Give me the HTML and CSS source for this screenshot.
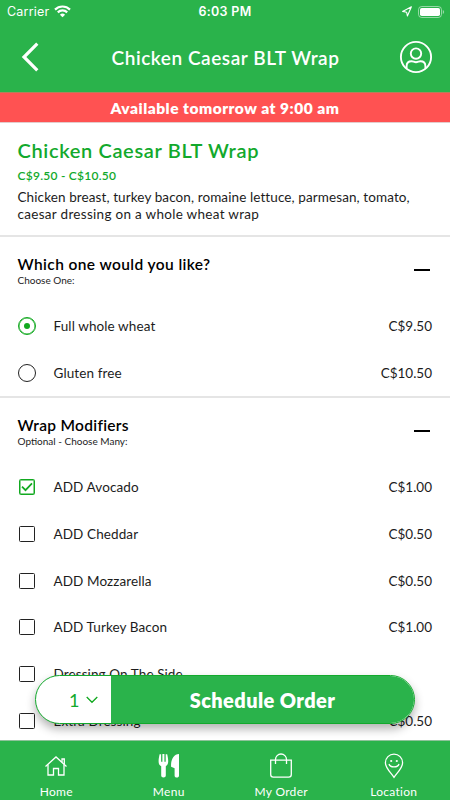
FILE: index.html
```
<!DOCTYPE html>
<html lang="en">
<head>
  <meta charset="UTF-8" />
  <meta name="viewport" content="width=device-width, initial-scale=1.0"/>
  <title>Chicken Caesar BLT Wrap</title>
  <link rel="stylesheet" href="styles.css">
</head>
<body>

  <header>
    <div class="status-bar">
      <div class="carrier">
        <span>Carrier</span>
        <svg width="17" height="13" viewBox="0 0 17 13" fill="none" stroke="#fff" stroke-width="2.2">
          <path d="M1 4.6a10.6 10.6 0 0 1 15 0"/>
          <path d="M3.8 7.4a6.7 6.7 0 0 1 9.4 0"/>
          <path d="M8.5 12.3L5.9 9.7a3.7 3.7 0 0 1 5.2 0z" fill="#fff" stroke="none"/>
        </svg>
      </div>
      <span class="time">6:03 PM</span>
      <div class="indicators">
        <svg width="10" height="11" viewBox="0 0 10 11" fill="none" stroke="#fff" stroke-width="1.1" stroke-linejoin="round">
          <path d="M9.4 .8L5.4 10 4.6 6.2 .6 5.4z"/>
        </svg>
        <svg width="27" height="12" viewBox="0 0 27 12">
          <rect x=".5" y=".5" width="23" height="11" rx="3.2" fill="none" stroke="#fff" stroke-opacity=".5"/>
          <rect x="2" y="2" width="20" height="8" rx="1.8" fill="#fff"/>
          <path d="M24.8 4v4c1.8-.6 1.8-3.4 0-4z" fill="#fff" fill-opacity=".5"/>
        </svg>
      </div>
    </div>
    <div class="nav-bar">
      <svg class="back" width="18" height="30" viewBox="0 0 18 30" fill="none" stroke="#fff" stroke-width="3.2">
        <path d="M16.3 1.7L3 15l13.3 13.3"/>
      </svg>
      <h1>Chicken Caesar BLT Wrap</h1>
      <svg class="account" width="34" height="34" viewBox="0 0 34 34" fill="none" stroke="#fff" stroke-width="1.9">
        <circle cx="17" cy="17" r="15.1"/>
        <circle cx="17" cy="13.6" r="5.2"/>
        <path d="M7.6 28.5v-2.2c0-3.3 2.2-5 5-5 1.6 0 2.5.9 4.4.9s2.8-.9 4.4-.9c2.8 0 5 1.7 5 5v2.2"/>
      </svg>
    </div>
  </header>

  <div class="banner"><span>Available tomorrow at 9:00 am</span></div>

  <main>
    <section class="item-info">
      <h2>Chicken Caesar BLT Wrap</h2>
      <p class="price-range">C$9.50 - C$10.50</p>
      <p class="description"><span>Chicken breast, turkey bacon, romaine lettuce, parmesan, tomato,</span><br>caesar dressing on a whole wheat wrap</p>
    </section>

    <section class="options">
      <div class="options-header">
        <div>
          <h3 class="wide">Which one would you like?</h3>
          <p>Choose One:</p>
        </div>
        <span class="collapse"></span>
      </div>
      <div class="option">
        <span class="radio selected"></span>
        <span class="name">Full whole wheat</span>
        <span class="price">C$9.50</span>
      </div>
      <div class="option">
        <span class="radio"></span>
        <span class="name">Gluten free</span>
        <span class="price">C$10.50</span>
      </div>
    </section>

    <section class="options modifiers">
      <div class="options-header">
        <div>
          <h3>Wrap Modifiers</h3>
          <p>Optional - Choose Many:</p>
        </div>
        <span class="collapse"></span>
      </div>
      <div class="option">
        <span class="checkbox checked">
          <svg width="12" height="10" viewBox="0 0 12 10" fill="none" stroke="#12a920" stroke-width="1.7">
            <path d="M1 4.7L4.5 8.2 11 1.4"/>
          </svg>
        </span>
        <span class="name">ADD Avocado</span>
        <span class="price">C$1.00</span>
      </div>
      <div class="option">
        <span class="checkbox"></span>
        <span class="name">ADD Cheddar</span>
        <span class="price">C$0.50</span>
      </div>
      <div class="option">
        <span class="checkbox"></span>
        <span class="name">ADD Mozzarella</span>
        <span class="price">C$0.50</span>
      </div>
      <div class="option">
        <span class="checkbox"></span>
        <span class="name">ADD Turkey Bacon</span>
        <span class="price">C$1.00</span>
      </div>
      <div class="option">
        <span class="checkbox"></span>
        <span class="name">Dressing On The Side</span>
      </div>
      <div class="option">
        <span class="checkbox"></span>
        <span class="name">Extra Dressing</span>
        <span class="price">C$0.50</span>
      </div>
    </section>
  </main>

  <div class="order-bar">
    <div class="quantity">
      <span>1</span>
      <svg width="12" height="8" viewBox="0 0 12 8" fill="none" stroke="#12a920" stroke-width="1.3">
        <path d="M.7 1L6 6.3 11.3 1"/>
      </svg>
    </div>
    <div class="schedule"><span>Schedule Order</span></div>
  </div>

  <nav class="tabs">
    <div class="tab">
      <svg width="24" height="26" viewBox="0 0 24 26" fill="none" stroke="#fff" stroke-width="1.3">
        <path d="M1.5 13.5L12 4l10.5 9.5"/>
        <path d="M18 9.2V6h2.3v5.3"/>
        <path d="M4 11.5V22h5.5v-6.5h5V22H20V11.5"/>
      </svg>
      <span>Home</span>
    </div>
    <div class="tab">
      <svg width="24" height="26" viewBox="0 0 24 26" fill="#fff">
        <path d="M2.6 1.3h1.5v7.4h1.3V1h2v7.7h1.3V1.3h1.5c.6 2.7 1 5 1 7.2 0 2.5-1.2 4-2.4 4.7v9.3c0 1.3-.9 2-2.3 2s-2.3-.7-2.3-2v-9.3C2.6 12.5 1.6 11 1.6 8.5c0-2.2.4-4.5 1-7.2z"/>
        <path d="M22 1v21.7c0 1.2-.9 1.8-2.2 1.8s-2.2-.6-2.2-1.8v-7.5l-3.5-1.4C13.5 7.5 16.5 1 22 1z"/>
      </svg>
      <span>Menu</span>
    </div>
    <div class="tab">
      <svg width="24" height="26" viewBox="0 0 24 26" fill="none" stroke="#fff" stroke-width="1.3">
        <path d="M1.7 7.2h20.6v14.3a2.6 2.6 0 0 1-2.6 2.6H4.3a2.6 2.6 0 0 1-2.6-2.6z"/>
        <path d="M6.5 11V6.5a5.5 5.5 0 0 1 11 0V11"/>
      </svg>
      <span>My Order</span>
    </div>
    <div class="tab">
      <svg width="24" height="26" viewBox="0 0 24 26" fill="none" stroke="#fff" stroke-width="1.3">
        <path d="M12 24.3C8.2 19 3.4 14.8 3.4 9.7a8.6 8.6 0 0 1 17.2 0c0 5.1-4.8 9.3-8.6 14.6z"/>
        <path d="M7 11c1 3.8 9 3.8 10 0"/>
        <circle cx="9.2" cy="8" r="1.1" fill="#fff" stroke="none"/>
        <circle cx="14.8" cy="8" r="1.1" fill="#fff" stroke="none"/>
      </svg>
      <span>Location</span>
    </div>
  </nav>

</body>
</html>
```
FILE: styles.css
```
* {
  box-sizing: border-box;
}

body {
  margin: 0;
  height: 800px;
  overflow: hidden;
  display: flex;
  flex-direction: column;
  font-family: Lato, "Open Sans", sans-serif;
  background: #fff;
  color: #000;
}

h1, h2, h3, p {
  margin: 0;
}

svg {
  display: block;
  flex: none;
}

header {
  height: 92px;
  flex: none;
  background: #2ab34b;
  color: #fff;
}

.status-bar {
  height: 22px;
  padding: 1px 5px 0 7px;
  display: grid;
  grid-template-columns: 1fr auto 1fr;
  align-items: center;
  font-family: Inter, sans-serif;
  font-size: 12.5px;
}

.carrier {
  display: flex;
  align-items: center;
  gap: 5px;
  letter-spacing: 0.2px;
}

.time {
  font-weight: 600;
  letter-spacing: 0.3px;
  padding-right: 2px;
}

.indicators {
  display: flex;
  justify-content: flex-end;
  align-items: center;
  gap: 6px;
}

.nav-bar {
  height: 70px;
  padding: 0 17px 0 21px;
  display: flex;
  align-items: center;
  justify-content: space-between;
}

h1 {
  font-size: 19px;
  font-weight: 600;
  letter-spacing: 0.55px;
  white-space: nowrap;
  padding-left: 13px;
}

.banner {
  height: 31px;
  flex: none;
  display: flex;
  align-items: center;
  justify-content: center;
  background: #ff5252;
  border-top: 1px solid #b5805a;
  border-bottom: 1px solid #e3cccc;
  color: #fff;
  font-size: 15.5px;
  font-weight: 800;
  letter-spacing: 0.5px;
}

main {
  flex: 1;
  min-height: 0;
  overflow: hidden;
}

.item-info {
  height: 114px;
  padding: 14px 18px 0 17.5px;
  border-bottom: 2px solid #e5e5e5;
}

h2 {
  font-size: 20px;
  line-height: 26px;
  font-weight: 600;
  letter-spacing: 0.65px;
  color: #12a92c;
}

.price-range {
  margin-top: 4px;
  font-size: 12px;
  line-height: 17px;
  font-weight: 600;
  letter-spacing: 0.25px;
  color: #12a92c;
}

.description {
  margin-top: 5px;
  font-size: 13.5px;
  line-height: 16.5px;
  letter-spacing: 0.3px;
  white-space: nowrap;
  color: #1c1c1c;
}

.description span {
  letter-spacing: 0.1px;
}

.options {
  height: 161px;
  padding: 0 18px 0 17.5px;
  border-bottom: 2px solid #e5e5e5;
}

.modifiers {
  height: auto;
  border-bottom: none;
}

.options-header {
  height: 66px;
  padding: 18px 2px 0 0;
  display: flex;
  justify-content: space-between;
}

h3 {
  font-size: 15.5px;
  line-height: 19px;
  font-weight: 600;
  letter-spacing: 0.3px;
}

h3.wide {
  letter-spacing: 0.4px;
}

.options-header p {
  font-size: 10px;
  line-height: 12px;
  color: #1c1c1c;
}

.collapse {
  width: 16px;
  height: 2px;
  margin-top: 14px;
  background: #000;
}

.option {
  height: 46.7px;
  display: flex;
  align-items: center;
  font-size: 13.5px;
  color: #1c1c1c;
}

.radio {
  width: 18px;
  height: 18px;
  border: 1px solid #222;
  border-radius: 50%;
}

.radio.selected {
  display: flex;
  align-items: center;
  justify-content: center;
  border-color: #12a920;
  box-shadow: inset 0 0 0 0.5px #12a920;
}

.radio.selected::before {
  content: "";
  width: 6px;
  height: 6px;
  border-radius: 50%;
  background: #12a920;
}

.checkbox {
  width: 16px;
  height: 16px;
  margin: 0 1px;
  display: flex;
  align-items: center;
  justify-content: center;
  border: 1px solid #222;
  border-radius: 1.5px;
}

.checkbox.checked {
  border-color: #12a920;
  box-shadow: inset 0 0 0 0.5px #12a920;
}

.name {
  margin-left: 18px;
  letter-spacing: 0.1px;
}

.price {
  margin-left: auto;
}

/* floats over the option list */
.order-bar {
  position: absolute;
  left: 35px;
  top: 675px;
  width: 380px;
  height: 49px;
  display: flex;
  overflow: hidden;
  border: 1px solid #12a92c;
  border-radius: 25px;
  background: #fff;
  box-shadow: 0 5px 10px rgba(0, 0, 0, 0.3);
}

.quantity {
  width: 75px;
  padding: 0 13px 0 33px;
  display: flex;
  align-items: center;
  justify-content: space-between;
  font-size: 18px;
  color: #12a92c;
}

.schedule {
  flex: 1;
  display: flex;
  align-items: center;
  justify-content: center;
  background: #2ab34b;
  color: #fff;
  font-size: 20px;
  font-weight: 800;
  letter-spacing: 0.4px;
}

.tabs {
  height: 60px;
  flex: none;
  display: grid;
  grid-template-columns: repeat(4, 1fr);
  background: #2ab34b;
  border-top: 1px solid #8fc29b;
  color: #fff;
}

.tab {
  display: flex;
  flex-direction: column;
  align-items: center;
  padding-top: 12px;
  gap: 4px;
  font-size: 12px;
  line-height: 17px;
  letter-spacing: 0.3px;
}
```
